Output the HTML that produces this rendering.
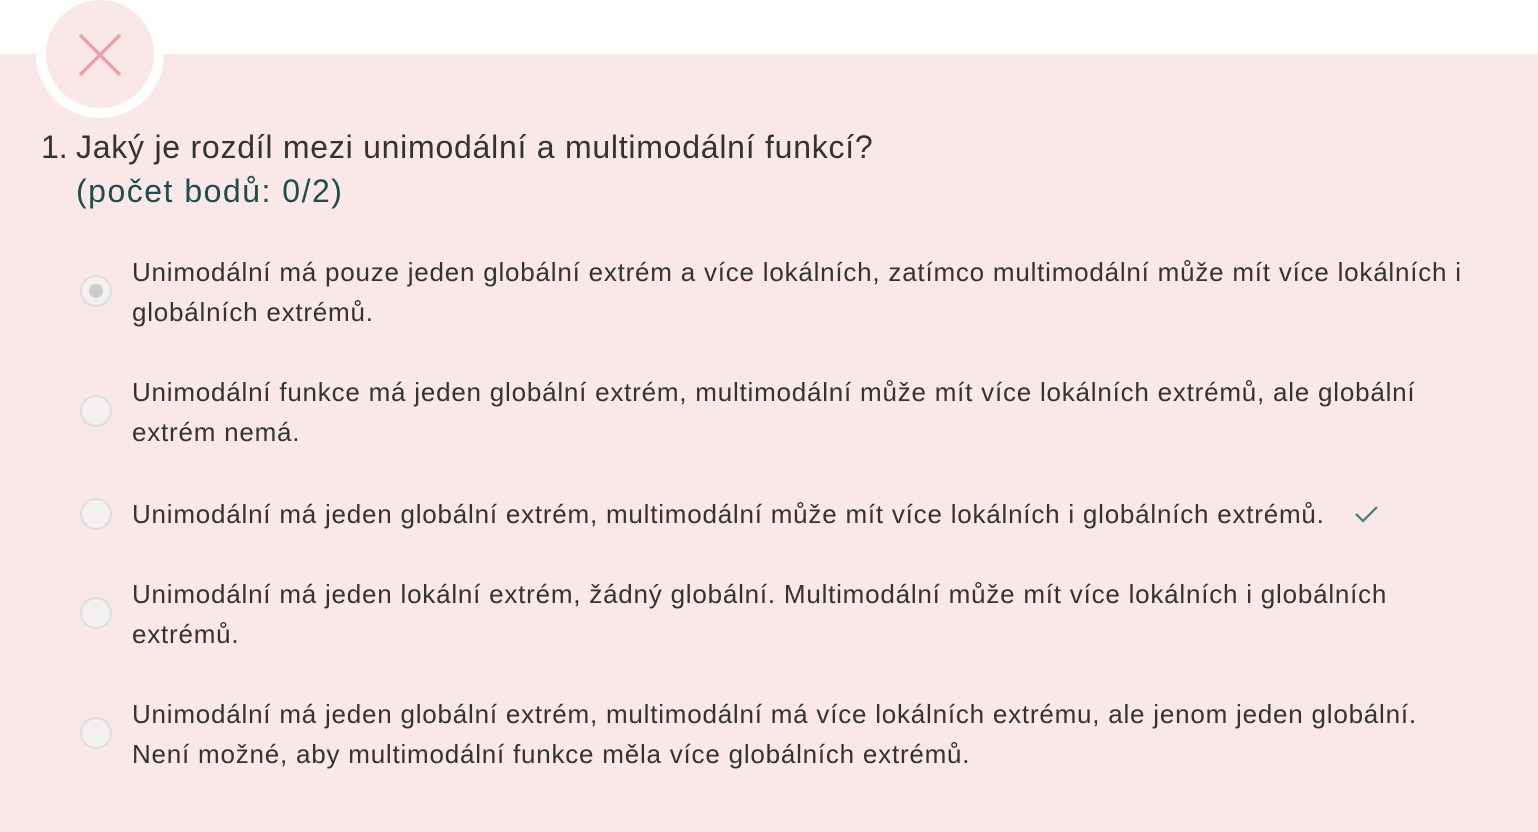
<!DOCTYPE html>
<html><head><meta charset="utf-8"><style>
body{margin:0;width:1538px;height:832px;overflow:hidden;background:#fff;font-family:"Liberation Sans",sans-serif;position:relative}
.bg{position:absolute;left:0;top:54px;width:1538px;height:778px;background:#fae8e8}
.ring{position:absolute;left:36px;top:-10px;width:128px;height:128px;border-radius:50%;background:#fff}
.inner{position:absolute;left:46px;top:0;width:108px;height:108px;border-radius:50%;background:#fae8e8}
.q{position:absolute;left:76px;top:125px;font-size:32px;color:#333;line-height:44px;white-space:nowrap;letter-spacing:0.75px}
.num{position:absolute;left:41px;top:125px;font-size:32px;color:#333;line-height:44px}
.pts{position:absolute;left:76px;top:169px;font-size:32px;color:#1d4d4d;line-height:44px;letter-spacing:1.5px}
.opt{position:absolute;left:132px;font-size:26px;color:#333;line-height:40px;white-space:nowrap;letter-spacing:0.78px}
.r{position:absolute;left:80px;width:32px;height:32px;border-radius:50%;border:2px solid #ddd;background:#f3f0f0;box-sizing:border-box}
.dot{position:absolute;left:7px;top:7px;width:14px;height:14px;border-radius:50%;background:#ccc}
</style></head><body>
<div class="bg"></div>
<div class="ring"></div>
<div class="inner"></div>
<svg style="position:absolute;left:78px;top:33px" width="44" height="44"><path d="M2 2L42 42M42 2L2 42" stroke="#eaa2a4" stroke-width="3.5"/></svg>
<div class="num">1.</div>
<div class="q">Jaký je rozdíl mezi unimodální a multimodální funkcí?</div>
<div class="pts">(počet bodů: 0/2)</div>

<div class="r" style="top:275px"><div class="dot"></div></div>
<div class="opt" style="top:252px">Unimodální má pouze jeden globální extrém a více lokálních, zatímco multimodální může mít více lokálních i<br>globálních extrémů.</div>

<div class="r" style="top:395px"></div>
<div class="opt" style="top:372px">Unimodální funkce má jeden globální extrém, multimodální může mít více lokálních extrémů, ale globální<br>extrém nemá.</div>

<div class="r" style="top:498px"></div>
<div class="opt" style="top:494px">Unimodální má jeden globální extrém, multimodální může mít více lokálních i globálních extrémů.</div>
<svg style="position:absolute;left:1354px;top:504px" width="26" height="22"><path d="M2 10L9 17L23 3" stroke="#3a8080" stroke-width="2.2" fill="none"/></svg>

<div class="r" style="top:597px"></div>
<div class="opt" style="top:574px">Unimodální má jeden lokální extrém, žádný globální. Multimodální může mít více lokálních i globálních<br>extrémů.</div>

<div class="r" style="top:717px"></div>
<div class="opt" style="top:694px">Unimodální má jeden globální extrém, multimodální má více lokálních extrému, ale jenom jeden globální.<br>Není možné, aby multimodální funkce měla více globálních extrémů.</div>
</body></html>
